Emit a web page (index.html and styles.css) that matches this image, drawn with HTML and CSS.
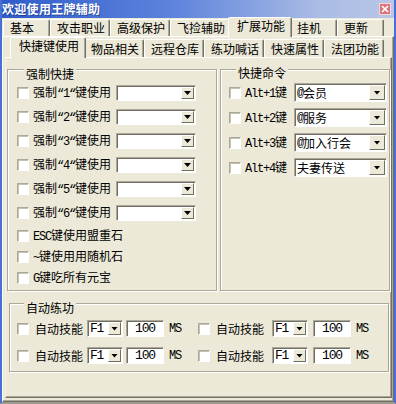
FILE: index.html
```html
<!DOCTYPE html>
<html lang="zh-CN">
<head>
    <meta charset="UTF-8">
    <title>欢迎使用王牌辅助</title>
    <link rel="stylesheet" href="styles.css">
</head>
<body>
<div class="window">
    <div class="titlebar">
        <span class="title">欢迎使用王牌辅助</span>
        <span class="close">
            <svg width="8" height="8" viewBox="0 0 8 8"><path d="M1 1L7 7M7 1L1 7" stroke="#fff" stroke-width="1.7"/></svg>
        </span>
    </div>
    <div class="tabs tabs-main">
        <div class="tab">基本</div>
        <div class="tab">攻击职业</div>
        <div class="tab">高级保护</div>
        <div class="tab">飞捡辅助</div>
        <div class="tab on">扩展功能</div>
        <div class="tab">挂机</div>
        <div class="tab">更新</div>
    </div>
    <div class="panel panel-main">
        <div class="tabs tabs-sub">
            <div class="tab on">快捷键使用</div>
            <div class="tab">物品相关</div>
            <div class="tab">远程仓库</div>
            <div class="tab">练功喊话</div>
            <div class="tab">快速属性</div>
            <div class="tab">法团功能</div>
        </div>
        <div class="panel panel-sub">
            <div class="groups">
                <div class="group force">
                    <div class="group-title">强制快捷</div>
                    <div class="row">
                        <span class="check"></span>
                        <span class="label">强制<span class="en">“1“</span>键使用</span>
                        <span class="combo"><span class="val"></span><span class="btn"></span></span>
                    </div>
                    <div class="row">
                        <span class="check"></span>
                        <span class="label">强制<span class="en">“2“</span>键使用</span>
                        <span class="combo"><span class="val"></span><span class="btn"></span></span>
                    </div>
                    <div class="row">
                        <span class="check"></span>
                        <span class="label">强制<span class="en">“3“</span>键使用</span>
                        <span class="combo"><span class="val"></span><span class="btn"></span></span>
                    </div>
                    <div class="row">
                        <span class="check"></span>
                        <span class="label">强制<span class="en">“4“</span>键使用</span>
                        <span class="combo"><span class="val"></span><span class="btn"></span></span>
                    </div>
                    <div class="row">
                        <span class="check"></span>
                        <span class="label">强制<span class="en">“5“</span>键使用</span>
                        <span class="combo"><span class="val"></span><span class="btn"></span></span>
                    </div>
                    <div class="row">
                        <span class="check"></span>
                        <span class="label">强制<span class="en">“6“</span>键使用</span>
                        <span class="combo"><span class="val"></span><span class="btn"></span></span>
                    </div>
                    <div class="row row-s">
                        <span class="check"></span>
                        <span class="label"><span class="en">ESC</span>键使用盟重石</span>
                    </div>
                    <div class="row row-s">
                        <span class="check"></span>
                        <span class="label"><span class="en">~</span>键使用用随机石</span>
                    </div>
                    <div class="row row-s">
                        <span class="check"></span>
                        <span class="label"><span class="en">G</span>键吃所有元宝</span>
                    </div>
                </div>
                <div class="group cmd">
                    <div class="group-title">快捷命令</div>
                    <div class="row">
                        <span class="check"></span>
                        <span class="label"><span class="en">Alt+1</span>键</span>
                        <span class="combo"><span class="val"><span class="en">@</span>会员</span><span class="btn"></span></span>
                    </div>
                    <div class="row">
                        <span class="check"></span>
                        <span class="label"><span class="en">Alt+2</span>键</span>
                        <span class="combo"><span class="val"><span class="en">@</span>服务</span><span class="btn"></span></span>
                    </div>
                    <div class="row">
                        <span class="check"></span>
                        <span class="label"><span class="en">Alt+3</span>键</span>
                        <span class="combo"><span class="val"><span class="en">@</span>加入行会</span><span class="btn"></span></span>
                    </div>
                    <div class="row">
                        <span class="check"></span>
                        <span class="label"><span class="en">Alt+4</span>键</span>
                        <span class="combo"><span class="val">夫妻传送</span><span class="btn"></span></span>
                    </div>
                </div>
            </div>
            <div class="group auto">
                <div class="group-title">自动练功</div>
                <div class="row">
                    <div class="skill">
                        <span class="check"></span>
                        <span class="label">自动技能</span>
                        <span class="combo"><span class="val en">F1</span><span class="btn"></span></span>
                        <span class="edit en">100</span>
                        <span class="unit en">MS</span>
                    </div>
                    <div class="skill skill-r">
                        <span class="check"></span>
                        <span class="label">自动技能</span>
                        <span class="combo"><span class="val en">F1</span><span class="btn"></span></span>
                        <span class="edit en">100</span>
                        <span class="unit en">MS</span>
                    </div>
                </div>
                <div class="row">
                    <div class="skill">
                        <span class="check"></span>
                        <span class="label">自动技能</span>
                        <span class="combo"><span class="val en">F1</span><span class="btn"></span></span>
                        <span class="edit en">100</span>
                        <span class="unit en">MS</span>
                    </div>
                    <div class="skill skill-r">
                        <span class="check"></span>
                        <span class="label">自动技能</span>
                        <span class="combo"><span class="val en">F1</span><span class="btn"></span></span>
                        <span class="edit en">100</span>
                        <span class="unit en">MS</span>
                    </div>
                </div>
            </div>
        </div>
    </div>
</div>
</body>
</html>
```

FILE: styles.css
```css
* {
    padding: 0;
    margin: 0;
    box-sizing: border-box;
}

body {
    background: #ece9d8;
    color: #000;
    font: 12px/14px "Noto Sans CJK SC", sans-serif;
}

.en {
    font-family: "Liberation Mono", monospace;
    letter-spacing: -1.2px;
}

.window {
    width: 396px;
    height: 404px;
    display: flex;
    flex-direction: column;
    border-left: 2px solid #4a6fd4;
    border-right: 2px solid #4a6fd4;
    border-bottom: 2px solid #9c9a8f;
}

/* title bar */
.titlebar {
    height: 18px;
    flex: none;
    display: flex;
    align-items: center;
    justify-content: space-between;
    background: linear-gradient(to right, #2f5ccb, #5f85dc 45%, #a9bbe5 80%, #b9c6e6);
}

.title {
    color: #fff;
    font-weight: bold;
    letter-spacing: 0.3px;
    text-shadow: 1px 1px 0 rgba(0, 0, 60, 0.35);
}

.close {
    width: 12px;
    height: 12px;
    margin-right: 3px;
    display: flex;
    align-items: center;
    justify-content: center;
    background: #d9737d;
    border: 1px solid #f2d6da;
}

/* tabs */
.tabs {
    display: flex;
    align-items: flex-end;
    flex: none;
}

.tabs-main {
    height: 18px;
    padding-left: 1px;
}

.tabs-sub {
    height: 20px;
    padding-left: 7px;
}

.tab {
    height: 17px;
    min-width: 47px;
    padding: 1px 4px 0 6px;
    white-space: nowrap;
    border: 1px solid;
    border-bottom: 0;
    border-color: #fff #716f64 transparent #fff;
    box-shadow: inset -1px 0 #aca899;
    border-radius: 2px 2px 0 0;
}

.tabs-sub .tab {
    height: 18px;
    padding-top: 2px;
}

.tab.on {
    position: relative;
    z-index: 1;
    height: 20px;
    margin: 0 -2px -1px;
    padding: 1px 6px 0 8px;
    background: #ece9d8;
}

.tabs-sub .tab.on {
    height: 21px;
    padding-top: 1px;
}

/* panels */
.panel {
    border: 1px solid;
    border-color: #fff #716f64 #716f64 #fff;
    box-shadow: inset -1px -1px #aca899;
}

.panel-main {
    flex: 1;
    display: flex;
    flex-direction: column;
    padding: 0 1px 3px 2px;
}

.panel-sub {
    flex: 1;
    padding-left: 1px;
    border-left-color: #f4f2e8;
}

/* group boxes */
.groups {
    display: grid;
    grid-template-columns: 210px 170px;
    gap: 3px;
    margin-top: 11px;
}

.group {
    display: flex;
    flex-direction: column;
    border: 1px solid #aca899;
    box-shadow: inset 1px 1px #fff, 1px 1px #fff;
}

.group-title {
    align-self: flex-start;
    margin: -8px 0 0 7px;
    padding: 0 2px;
    background: #ece9d8;
}

.row {
    display: flex;
    align-items: center;
}

.force {
    padding: 5px 0 2px 9px;
}

.force .row {
    height: 24px;
}

.force .row-s {
    height: 21px;
}

.cmd {
    padding: 4px 0 0 8px;
}

.cmd .row {
    height: 25px;
}

.auto {
    margin: 12px 2px 0;
    padding: 5px 0 2px 7px;
}

.auto .row {
    height: 27px;
}

/* controls */
.check {
    width: 12px;
    height: 12px;
    flex: none;
    background: #fff;
    border: 1px solid;
    border-color: #aca899 #fff #fff #aca899;
    box-shadow: inset 1px 1px #c5c2b2;
}

.label {
    margin-left: 4px;
    white-space: nowrap;
}

.force .label {
    width: 83px;
}

.cmd .label {
    width: 49px;
}

.combo {
    display: flex;
    width: 80px;
    height: 16px;
    padding: 1px;
    background: #fff;
    border: 1px solid;
    border-color: #aca899 #fff #fff #aca899;
    box-shadow: inset 1px 1px #716f64;
}

.val {
    flex: 1;
    padding-left: 1px;
    display: flex;
    align-items: center;
    white-space: nowrap;
    overflow: hidden;
}

.val.en {
    font-size: 13px;
}

.btn {
    width: 13px;
    flex: none;
    display: flex;
    align-items: center;
    justify-content: center;
    background: #ece9d8;
    border: 1px solid;
    border-color: #fff #716f64 #716f64 #fff;
}

.btn::after {
    content: "";
    width: 7px;
    height: 4px;
    background: #000;
    clip-path: polygon(0 0, 100% 0, 50% 100%);
}

.cmd .combo {
    width: 93px;
    height: 19px;
}

.cmd .btn {
    width: 16px;
}

.skill {
    width: 181px;
    display: flex;
    align-items: center;
}

.skill .label {
    width: 52px;
    margin-left: 6px;
}

.skill-r .label {
    width: 56px;
}

.skill .combo {
    width: 36px;
    height: 17px;
}

.edit {
    width: 38px;
    height: 17px;
    margin-left: 3px;
    display: flex;
    align-items: center;
    justify-content: center;
    font-size: 13px;
    background: #fff;
    border: 1px solid;
    border-color: #aca899 #fff #fff #aca899;
    box-shadow: inset 1px 1px #716f64;
}

.skill-r .edit {
    margin-left: 5px;
}

.unit {
    margin-left: 5px;
}
```
